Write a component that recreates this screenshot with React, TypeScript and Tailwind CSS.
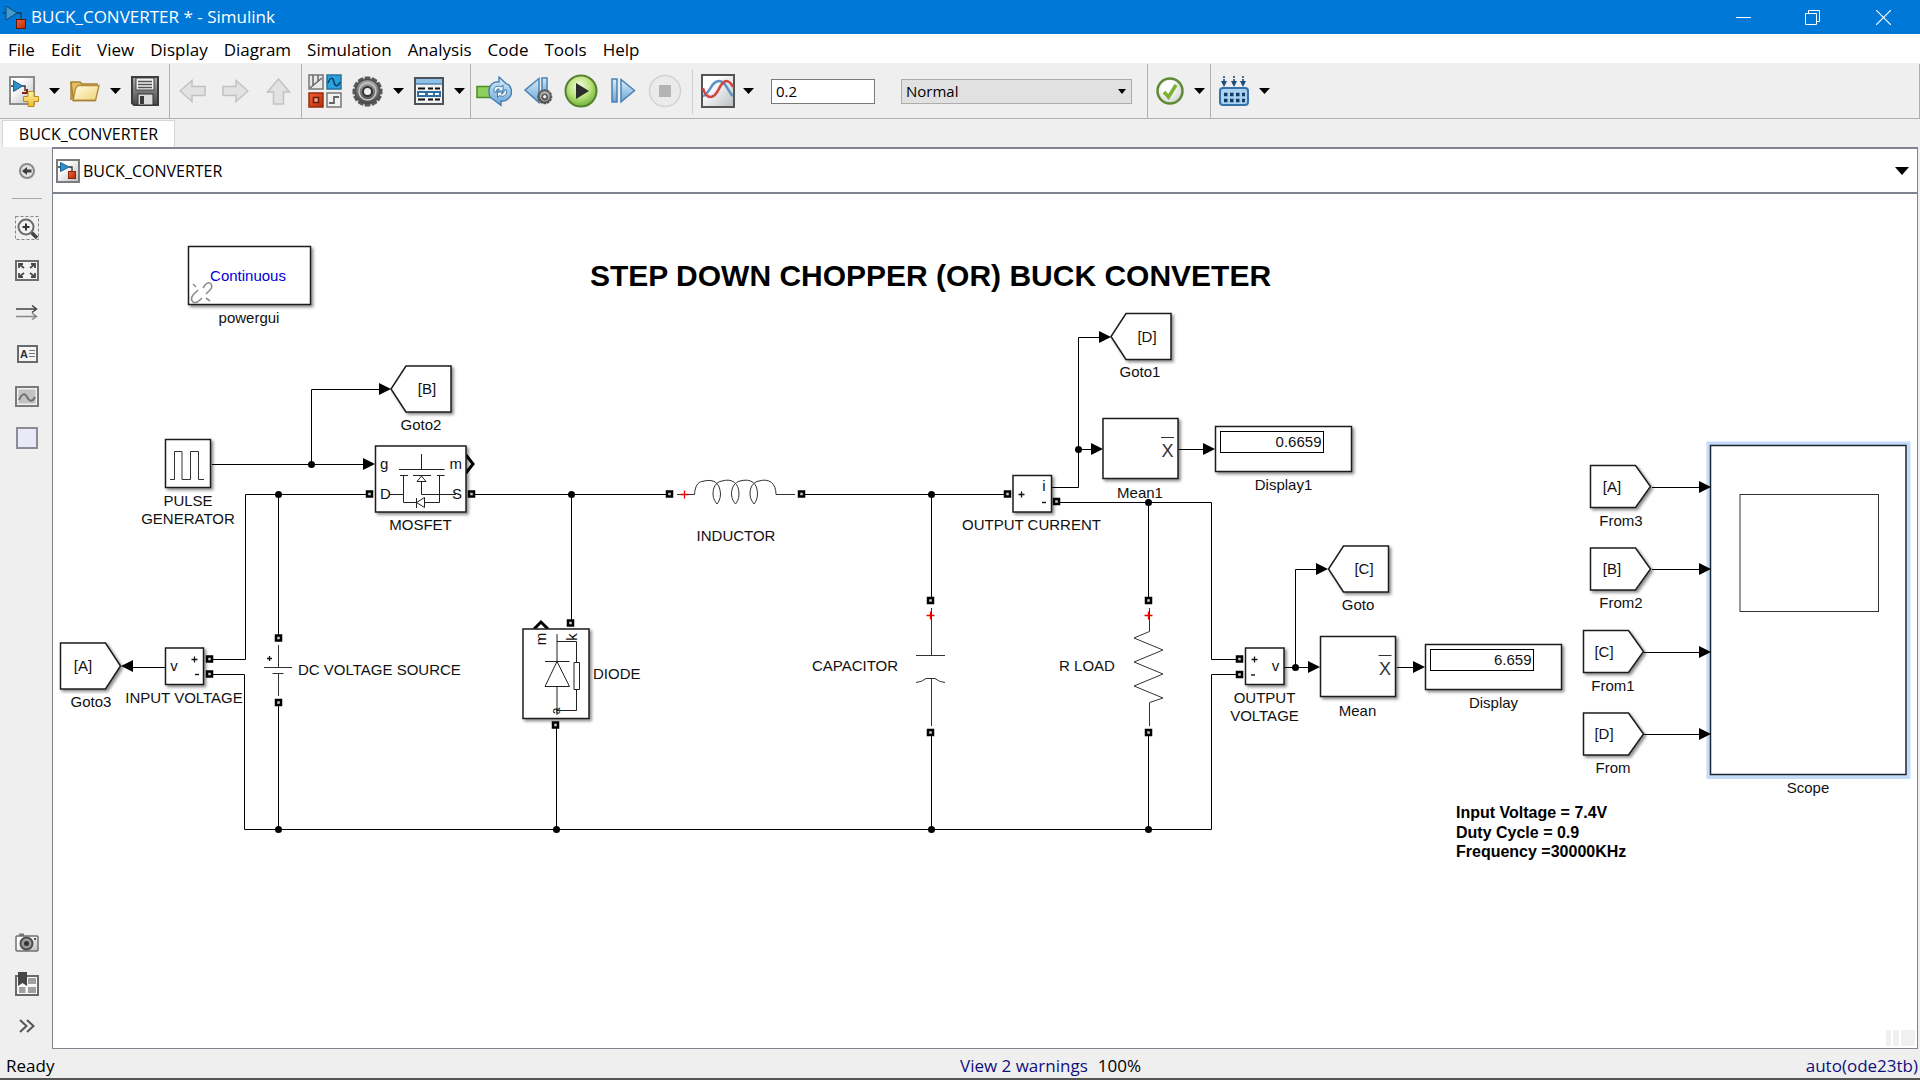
import type { ReactNode } from "react";

/* ---------- Toolbar and palette icons ---------- */

function Defs() {
  return (
    <svg width="0" height="0" className="absolute" aria-hidden="true">
      <defs>
        <linearGradient id="page" x1="0" y1="0" x2="1" y2="1">
          <stop offset="0.3" stopColor="#ffffff" />
          <stop offset="1" stopColor="#b9bcc0" />
        </linearGradient>
        <linearGradient id="gold" x1="0" y1="0" x2="0" y2="1">
          <stop offset="0" stopColor="#fff3b0" />
          <stop offset="1" stopColor="#f0b92a" />
        </linearGradient>
        <linearGradient id="folder" x1="0" y1="0" x2="1" y2="1">
          <stop offset="0" stopColor="#fffbe2" />
          <stop offset="1" stopColor="#f0d478" />
        </linearGradient>
        <linearGradient id="steel" x1="0" y1="0" x2="0" y2="1">
          <stop offset="0" stopColor="#a9a9a9" />
          <stop offset="1" stopColor="#4a4a4a" />
        </linearGradient>
        <linearGradient id="sky" x1="0" y1="0" x2="0" y2="1">
          <stop offset="0" stopColor="#d9ecfa" />
          <stop offset="1" stopColor="#6ba5d6" />
        </linearGradient>
        <radialGradient id="play" cx="0.45" cy="0.35" r="0.7">
          <stop offset="0" stopColor="#f4fbe4" />
          <stop offset="0.5" stopColor="#bde37e" />
          <stop offset="1" stopColor="#5fae2e" />
        </radialGradient>
        <radialGradient id="disc" cx="0.4" cy="0.35" r="0.7">
          <stop offset="0.3" stopColor="#ffffff" />
          <stop offset="1" stopColor="#d0d0d0" />
        </radialGradient>
        <linearGradient id="red" x1="0" y1="0" x2="1" y2="1">
          <stop offset="0" stopColor="#f0623a" />
          <stop offset="1" stopColor="#b52c0a" />
        </linearGradient>
      </defs>
    </svg>
  );
}

function Icon({ w, h, children }: { w: number; h: number; children: ReactNode }) {
  return (
    <svg width={w} height={h} viewBox={`0 0 ${w} ${h}`} fill="none" aria-hidden="true" className="block">
      {children}
    </svg>
  );
}

const Caret = () => (
  <Icon w={11} h={6}>
    <path d="M0 0H11L5.5 6Z" fill="#000" />
  </Icon>
);

const AppLogo = () => (
  <Icon w={24} h={24}>
    <path d="M0 8H3M14 8H18V15" stroke="#123a58" strokeWidth="1.3" />
    <path d="M3 1L14 8L3 15Z" fill="#3f9bd0" stroke="#14496f" />
    <rect x="13.5" y="14.5" width="9" height="9" fill="url(#red)" stroke="#5e1606" />
  </Icon>
);

const ModelIcon = () => (
  <Icon w={24} h={24}>
    <rect x="1" y="1" width="22" height="22" fill="url(#page)" stroke="#7b7b7b" strokeWidth="2" />
    <path d="M2 8H5M13 8H16V13" stroke="#333" strokeWidth="1.3" />
    <path d="M4.5 3.5L13 8L4.5 12.5Z" fill="#2f8fcb" stroke="#1d5f8c" />
    <rect x="12.5" y="12.5" width="7" height="7" fill="url(#red)" stroke="#8a2408" />
  </Icon>
);

const NewIcon = () => (
  <Icon w={30} h={31}>
    <rect x="1" y="1" width="24" height="27" fill="url(#page)" stroke="#8b8b8b" strokeWidth="2" />
    <path d="M2 10H5M13 10H16V15" stroke="#333" strokeWidth="1.4" />
    <path d="M4.5 4.5L13.5 10L4.5 15.5Z" fill="#2f8fcb" stroke="#1d5f8c" />
    <path d="M13 17H18V14H19" stroke="#8a2408" strokeWidth="2" />
    <path d="M19 15.5H25V20.5H29.5V25.5H25V30.5H19V25.5H14.5V20.5H19Z" fill="url(#gold)" stroke="#b98a1c" />
  </Icon>
);

const OpenIcon = () => (
  <Icon w={30} h={22}>
    <path d="M1 20V2H10L12 4H27V7" fill="#e3bf62" stroke="#a98336" strokeWidth="1.4" />
    <path d="M29 5.5H8L5.5 8.5L3 20.5H25.5Z" fill="url(#folder)" stroke="#b48d3c" strokeWidth="1.4" />
    <path d="M1 2L3.5 20.5H25.5" stroke="#a98336" strokeWidth="1.4" />
  </Icon>
);

const SaveIcon = () => (
  <Icon w={28} h={30}>
    <path d="M1 1H27V29H3L1 27Z" fill="url(#steel)" stroke="#3c3c3c" strokeWidth="2" />
    <rect x="5" y="2" width="18" height="12" fill="#f1f1f1" stroke="#444" />
    <path d="M7 5.5H21M7 8.5H21M7 11.5H21" stroke="#555" strokeWidth="1.5" />
    <rect x="7" y="18" width="15" height="11" fill="#dcdcdc" stroke="#333" />
    <rect x="9" y="20" width="4" height="8" fill="#3a3a3a" />
  </Icon>
);

const LeftIcon = () => (
  <Icon w={27} h={24}>
    <path d="M1 12L13 1.5V7.5H26V16.5H13V22.5Z" fill="#e2e2e2" stroke="#c2c2c2" strokeWidth="1.5" />
  </Icon>
);
const RightIcon = () => (
  <Icon w={27} h={24}>
    <path d="M26 12L14 1.5V7.5H1V16.5H14V22.5Z" fill="#e2e2e2" stroke="#c2c2c2" strokeWidth="1.5" />
  </Icon>
);
const UpIcon = () => (
  <Icon w={27} h={27}>
    <path d="M13.5 1L24.5 14H18.5V26H8.5V14H2.5Z" fill="#e2e2e2" stroke="#c2c2c2" strokeWidth="1.5" />
  </Icon>
);

const LibraryIcon = () => (
  <Icon w={34} h={34}>
    <rect x="1" y="1" width="14" height="14" fill="#e9e9e9" stroke="#777" strokeWidth="1.5" />
    <path d="M5 1V11M10 1V7M2 14L14 4" stroke="#666" strokeWidth="1.5" />
    <rect x="19" y="1" width="14" height="14" fill="#2aa0dd" stroke="#2672a0" strokeWidth="1.5" />
    <path d="M20 9C22 3 25 3 26 8S30 13 32 8" stroke="#0d3f66" strokeWidth="1.5" />
    <rect x="1" y="19" width="14" height="14" fill="url(#red)" stroke="#9a2b0c" strokeWidth="1.5" />
    <rect x="5.5" y="23.5" width="5" height="5" fill="#f7a58a" stroke="#6e1c05" strokeWidth="1.5" />
    <rect x="19" y="19" width="14" height="14" fill="#f1f1f1" stroke="#777" strokeWidth="1.5" />
    <path d="M21 29H26V23H31" stroke="#666" strokeWidth="1.8" />
  </Icon>
);

const GEAR_TEETH = [0, 30, 60, 90, 120, 150, 180, 210, 240, 270, 300, 330];
const GearShape = () => (
  <g>
    {GEAR_TEETH.map((a) => (
      <rect key={a} x="12.5" y="0.5" width="6" height="7" rx="1" fill="#5a5a5a" transform={`rotate(${a} 15.5 15.5)`} />
    ))}
    <circle cx="15.5" cy="15.5" r="12" fill="url(#steel)" stroke="#4d4d4d" strokeWidth="1.5" />
    <circle cx="15.5" cy="15.5" r="8.5" stroke="#c9c9c9" strokeWidth="1.5" />
    <circle cx="15.5" cy="15.5" r="4.5" fill="#efefef" stroke="#333" strokeWidth="2" />
  </g>
);
const GearIcon = () => (
  <Icon w={31} h={31}>
    <GearShape />
  </Icon>
);

const ExplorerIcon = () => (
  <Icon w={30} h={28}>
    <rect x="1" y="1" width="28" height="26" fill="#f2f2f2" stroke="#4d5358" strokeWidth="2" />
    <rect x="2" y="2" width="26" height="5" fill="#8fc0e8" />
    <path d="M1 7H29" stroke="#3d6f9c" strokeWidth="1.2" />
    <path d="M4 11.5H11M14 11.5H19M21 11.5H26M4 22.5H11M14 22.5H19M21 22.5H26" stroke="#111" strokeWidth="2" />
    <rect x="3" y="14" width="24" height="6" fill="#2f6fa8" />
    <path d="M5 17H11M14 17H19M21 17H25" stroke="#fff" strokeWidth="2" />
  </Icon>
);

const UpdateIcon = () => (
  <Icon w={36} h={31}>
    <rect x="1" y="10.500" width="14" height="11" fill="#8fd05a" stroke="#4f8a26" strokeWidth="1.5" />
    <path
      d="M13 17C12 9 18 5 23 6V1L30 7.500L33 9C36 13 36 17 34.500 20C32 24 28 25.500 25 25V29.500L18 24C14 22 13 20 13 17Z"
      fill="url(#sky)"
      stroke="#3f79ad"
      strokeWidth="1.3"
    />
    <path
      d="M18 16C17 11 21 9 25 11L27 9V15H21.500L23.500 13C21 12.500 20 14 20.500 16ZM30.500 14C31.500 19 27 21.500 23.500 19.500L21.500 21.500V16H27L25 18C27.500 18 28.500 16 28 14Z"
      fill="#f4f9fd"
      stroke="#3f79ad"
    />
  </Icon>
);

const StepBackIcon = () => (
  <Icon w={32} h={30}>
    <path d="M17 2.5V26.5L3 14Z" fill="url(#sky)" stroke="#4b81b2" strokeWidth="1.5" />
    <rect x="20" y="2" width="5" height="16" fill="url(#sky)" stroke="#4b81b2" strokeWidth="1.5" />
    <g transform="translate(15 13) scale(0.5)">
      <GearShape />
    </g>
  </Icon>
);

const PlayIcon = () => (
  <Icon w={34} h={34}>
    <circle cx="17" cy="17" r="15.5" fill="url(#play)" stroke="#57802f" strokeWidth="2" />
    <path d="M12 9L25 17L12 25Z" fill="#2b2b2b" />
  </Icon>
);

const StepIcon = () => (
  <Icon w={30} h={26}>
    <rect x="4" y="1" width="5" height="23" fill="url(#sky)" stroke="#4b81b2" strokeWidth="1.5" />
    <path d="M13 1.5V24L26.5 12.5Z" fill="url(#sky)" stroke="#4b81b2" strokeWidth="1.5" />
  </Icon>
);

const StopIcon = () => (
  <Icon w={34} h={34}>
    <circle cx="17" cy="17" r="15.5" fill="#ebebeb" stroke="#d2d2d2" strokeWidth="1.5" />
    <rect x="11" y="11" width="12" height="12" fill="#b3b3b3" />
  </Icon>
);

const SignalIcon = () => (
  <Icon w={34} h={34}>
    <rect x="1" y="1" width="32" height="32" fill="url(#page)" stroke="#555" strokeWidth="2" />
    <path d="M2 22C9 20 10 7 18 7C25 7 27 18 32 22" stroke="#5a93c8" strokeWidth="2.5" />
    <path d="M2 14C4 21 6 23 10 23C18 22 18 8 25 7C29 7 31 11 32 13" stroke="#cf4544" strokeWidth="2.5" />
  </Icon>
);

const CheckIcon = () => (
  <Icon w={28} h={28}>
    <circle cx="14" cy="14" r="12.5" fill="url(#disc)" stroke="#5f8a35" strokeWidth="2.5" />
    <path d="M8 15L12.5 20L20 8" stroke="#79b32c" strokeWidth="3.5" />
  </Icon>
);

const BuildIcon = () => (
  <Icon w={30} h={32}>
    <path d="M5 1V9M15 1V9M24 1V9" stroke="#1f4e7c" strokeWidth="1.6" strokeDasharray="2 1" />
    <path d="M2 6H8L5 12ZM12 6H18L15 12ZM21 6H27L24 12Z" fill="#1f4e7c" />
    <rect x="1" y="13" width="28" height="17" rx="3" fill="#a9d1f2" stroke="#3472a9" strokeWidth="2" />
    <path d="M5 19.5H26M5 25.5H26" stroke="#123c66" strokeWidth="3.5" strokeDasharray="3.5 2.5" />
  </Icon>
);

/* Palette icons */
const CollapseIcon = () => (
  <Icon w={18} h={18}>
    <circle cx="9" cy="9" r="7" fill="#e2e2e2" stroke="#8a8a8a" strokeWidth="2" />
    <path d="M4 9L9 5V7.5H13.5V10.5H9V13Z" fill="#3c3c3c" />
  </Icon>
);
const ZoomIcon = () => (
  <Icon w={24} h={24}>
    <rect x="0.5" y="0.5" width="23" height="23" stroke="#858585" strokeDasharray="3 2" />
    <path d="M16 16L22 22" stroke="#444" strokeWidth="3.5" />
    <circle cx="11" cy="11" r="7.5" fill="#f3f3f3" stroke="#6c6c6c" strokeWidth="2" />
    <path d="M11 7.5V14.5M7.5 11H14.5" stroke="#333" strokeWidth="2" />
  </Icon>
);
const FitIcon = () => (
  <Icon w={24} h={21}>
    <rect x="1" y="1" width="22" height="19" fill="#f3f3f3" stroke="#6e6e6e" strokeWidth="2" />
    <path d="M4 8V4H8M4.5 4.5L9 8M16 4H20V8M19.5 4.5L15 8M4 13V17H8M4.5 16.5L9 13M16 17H20V13M19.5 16.5L15 13" stroke="#4a4a4a" strokeWidth="1.8" />
  </Icon>
);
const ArrowsIcon = () => (
  <Icon w={22} h={15}>
    <path d="M0 4H20M16 0.5L20.5 4L16 7.5" stroke="#444" strokeWidth="1.5" />
    <path d="M0 11.5H20M16 8L20.5 11.5L16 14.5" stroke="#888" strokeWidth="1.5" />
  </Icon>
);
const AnnotationIcon = () => (
  <Icon w={21} h={18}>
    <rect x="1" y="1" width="19" height="16" fill="#f5f5f5" stroke="#6a6a6a" strokeWidth="2" />
    <text x="7" y="13" fontSize="11" fontWeight="700" textAnchor="middle" fill="#333" className="font-['Liberation_Sans',sans-serif]">
      A
    </text>
    <path d="M12 5.5H18M12 8.5H18M12 11.5H18" stroke="#777" />
  </Icon>
);
const ImageIcon = () => (
  <Icon w={24} h={21}>
    <rect x="1" y="1" width="22" height="19" fill="#f0f0f0" stroke="#7a7a7a" strokeWidth="2" />
    <rect x="3.5" y="3.5" width="17" height="14" fill="#c2c2c2" />
    <path d="M4 14C7 7 10 7 12 11S17 17 20 11" stroke="#707070" strokeWidth="2" />
  </Icon>
);
const AreaIcon = () => (
  <Icon w={22} h={22}>
    <rect x="1" y="1" width="20" height="20" fill="#e9e9f8" stroke="#8c8c96" strokeWidth="2" />
  </Icon>
);
const CameraIcon = () => (
  <Icon w={24} h={19}>
    <rect x="4" y="0.5" width="5" height="3" fill="#777" />
    <rect x="1" y="3" width="22" height="15" rx="1" fill="url(#page)" stroke="#707070" strokeWidth="1.5" />
    <circle cx="11.5" cy="10.5" r="6" fill="#9a9a9a" stroke="#4d4d4d" strokeWidth="2" />
    <circle cx="11.5" cy="10.5" r="2.5" fill="#333" />
    <rect x="19" y="5" width="2" height="2" fill="#555" />
  </Icon>
);
const BookmarkIcon = () => (
  <Icon w={24} h={24}>
    <rect x="1" y="4" width="22" height="19" fill="#f7f7f7" stroke="#6a6a6a" strokeWidth="2" />
    <path d="M13 6H21V12H13ZM13 15H21V21H13ZM4 15H10.5V21H4Z" fill="#a0a0a0" />
    <path d="M3 0H12V14L7.5 11L3 14Z" fill="#454545" />
  </Icon>
);
const MoreIcon = () => (
  <Icon w={16} h={14}>
    <path d="M1 1L7.5 7L1 13M8 1L14.5 7L8 13" stroke="#555" strokeWidth="2" />
  </Icon>
);

/* ---------- Window chrome ---------- */

function ToolButton({ label, children }: { label: string; children: ReactNode }) {
  return (
    <button type="button" aria-label={label} className="flex shrink-0 items-center justify-center">
      {children}
    </button>
  );
}

function Group({ className, children }: { className: string; children: ReactNode }) {
  return (
    <div className={`flex shrink-0 items-center border-r border-[#b0b0b0] ${className}`}>{children}</div>
  );
}

const MENUS = ["File", "Edit", "View", "Display", "Diagram", "Simulation", "Analysis", "Code", "Tools", "Help"];

function TitleBar() {
  return (
    <header className="flex h-[34px] shrink-0 items-center bg-[#0078d7] text-white">
      <div className="pl-[3px]">
        <AppLogo />
      </div>
      <h1 className="ml-1 flex-1">BUCK_CONVERTER * - Simulink</h1>
      <button type="button" aria-label="Minimize" className="flex h-full w-[71px] items-center justify-center">
        <Icon w={15} h={15}>
          <path d="M0 7.5H15" stroke="#fff" />
        </Icon>
      </button>
      <button type="button" aria-label="Restore" className="flex h-full w-[67px] items-center justify-center">
        <Icon w={15} h={15}>
          <path d="M0.5 3.5H11.5V14.5H0.5ZM3.5 3V0.5H14.5V11.5H12" stroke="#fff" />
        </Icon>
      </button>
      <button type="button" aria-label="Close" className="flex h-full w-[74px] items-center justify-center">
        <Icon w={15} h={15}>
          <path d="M0 0L15 15M15 0L0 15" stroke="#fff" strokeWidth="1.2" />
        </Icon>
      </button>
    </header>
  );
}

function Toolbar() {
  return (
    <div role="toolbar" className="flex h-[55px] shrink-0 border-r border-b border-[#b0b0b0]">
      <Group className="gap-2.5 pr-2.5 pl-[9px]">
        <ToolButton label="New model"><NewIcon /></ToolButton>
        <ToolButton label="New options"><Caret /></ToolButton>
        <ToolButton label="Open"><OpenIcon /></ToolButton>
        <ToolButton label="Open options"><Caret /></ToolButton>
        <ToolButton label="Save"><SaveIcon /></ToolButton>
      </Group>
      <Group className="gap-4 px-[9px]">
        <ToolButton label="Back"><LeftIcon /></ToolButton>
        <ToolButton label="Forward"><RightIcon /></ToolButton>
        <ToolButton label="Up to parent"><UpIcon /></ToolButton>
      </Group>
      <Group className="gap-2.5 pr-[5px] pl-1.5">
        <ToolButton label="Library browser"><LibraryIcon /></ToolButton>
        <ToolButton label="Model configuration"><GearIcon /></ToolButton>
        <ToolButton label="Configuration options"><Caret /></ToolButton>
        <ToolButton label="Model explorer"><ExplorerIcon /></ToolButton>
        <ToolButton label="Explorer options"><Caret /></ToolButton>
      </Group>
      <div className="flex shrink-0 items-center gap-2.5 pl-[5px]">
        <ToolButton label="Update model"><UpdateIcon /></ToolButton>
        <ToolButton label="Step back"><StepBackIcon /></ToolButton>
        <ToolButton label="Run"><PlayIcon /></ToolButton>
        <ToolButton label="Step forward"><StepIcon /></ToolButton>
        <ToolButton label="Stop"><StopIcon /></ToolButton>
        <div className="h-[45px] w-px bg-[#cfcfcf]" />
      </div>
      <Group className="gap-2 pr-[15px] pl-2">
        <ToolButton label="Simulation data inspector"><SignalIcon /></ToolButton>
        <ToolButton label="Inspector options"><Caret /></ToolButton>
        <input
          aria-label="Simulation stop time"
          defaultValue="0.2"
          className="ml-[9px] h-[25px] w-[104px] border border-[#7a7a7a] bg-white px-1 text-[15px] leading-none"
        />
        <div className="relative ml-[18px] w-[231px]">
          <select
            aria-label="Simulation mode"
            className="block h-[25px] w-full appearance-none border border-[#adadad] bg-[#e1e1e1] px-1 text-[15px] leading-none"
          >
            <option>Normal</option>
          </select>
          <svg width="8" height="5" viewBox="0 0 8 5" className="pointer-events-none absolute top-2.5 right-1.5" aria-hidden="true">
            <path d="M0 0H8L4 5Z" fill="#000" />
          </svg>
        </div>
      </Group>
      <Group className="gap-2.5 pr-[5px] pl-2">
        <ToolButton label="Model advisor"><CheckIcon /></ToolButton>
        <ToolButton label="Advisor options"><Caret /></ToolButton>
      </Group>
      <div className="flex items-center gap-2.5 pl-2">
        <ToolButton label="Build model"><BuildIcon /></ToolButton>
        <ToolButton label="Build options"><Caret /></ToolButton>
      </div>
    </div>
  );
}

function PaletteButton({ label, children }: { label: string; children: ReactNode }) {
  return (
    <button type="button" aria-label={label} className="flex h-[42px] w-full items-center justify-center">
      {children}
    </button>
  );
}

function Palette() {
  return (
    <aside className="flex w-[52px] shrink-0 flex-col pb-0.5 pl-0.5">
      <button type="button" aria-label="Hide browser" className="flex h-12 w-full items-center justify-center">
        <CollapseIcon />
      </button>
      <hr className="mx-2.5 mt-[3px] mb-2 border-[#a8a8a8]" />
      <PaletteButton label="Zoom"><ZoomIcon /></PaletteButton>
      <PaletteButton label="Fit to view"><FitIcon /></PaletteButton>
      <PaletteButton label="Sample time"><ArrowsIcon /></PaletteButton>
      <PaletteButton label="Annotation"><AnnotationIcon /></PaletteButton>
      <PaletteButton label="Image"><ImageIcon /></PaletteButton>
      <PaletteButton label="Area"><AreaIcon /></PaletteButton>
      <div className="flex-1" />
      <PaletteButton label="Screenshot"><CameraIcon /></PaletteButton>
      <PaletteButton label="Viewmarks"><BookmarkIcon /></PaletteButton>
      <PaletteButton label="More"><MoreIcon /></PaletteButton>
    </aside>
  );
}

/* ---------- Block diagram ---------- */

type Anchor = "start" | "middle" | "end";

function T({ x, y, anchor = "middle", children }: { x: number; y: number; anchor?: Anchor; children: ReactNode }) {
  return (
    <text x={x} y={y} textAnchor={anchor} fill="#111" stroke="none">
      {children}
    </text>
  );
}

function Box({ x, y, w, h }: { x: number; y: number; w: number; h: number }) {
  return <rect x={x} y={y} width={w} height={h} fill="#fff" stroke="#1c1c1c" strokeWidth="1.5" filter="url(#shade)" />;
}

/* Tag pointing left (dir -1) or right (dir 1); x is the flat side, y the centre line. */
function Tag({ x, y, dir, half, tag, name, nameX, nameY, tagX }: {
  x: number; y: number; dir: 1 | -1; half: number; tag: string; name: string; nameX: number; nameY: number; tagX: number;
}) {
  return (
    <g>
      <path
        d={`M${x} ${y - half}H${x + dir * 45}L${x + dir * 60} ${y}L${x + dir * 45} ${y + half}H${x}Z`}
        fill="#fff"
        stroke="#1c1c1c"
        strokeWidth="1.5"
        filter="url(#shade)"
      />
      <T x={tagX} y={y + 5}>{tag}</T>
      <T x={nameX} y={nameY}>{name}</T>
    </g>
  );
}

const Arrow = ({ x, y, dir = 1 }: { x: number; y: number; dir?: 1 | -1 }) => (
  <path d={`M${x} ${y}L${x - dir * 12} ${y - 6}V${y + 6}Z`} fill="#000" stroke="none" />
);

const Plus = ({ x, y, r = 3, color = "#111" }: { x: number; y: number; r?: number; color?: string }) => (
  <path d={`M${x - r} ${y}H${x + r}M${x} ${y - r}V${y + r}`} stroke={color} strokeWidth="1.3" />
);

const Minus = ({ x, y }: { x: number; y: number }) => <path d={`M${x - 2} ${y}H${x + 2}`} stroke="#111" strokeWidth="1.4" />;

const WIRES = [
  "M212 464.5H366",
  "M311.5 464.5V389.5H382",
  "M366 494.5H245.5V659.5H213",
  "M213 674.5H244.5V829.5H1211.5V674.5H1236",
  "M278.5 494.5V635M278.5 706V829.5",
  "M165 667.5H132",
  "M475 494.5H666",
  "M571.5 494.5V620",
  "M556.5 728V829.5",
  "M805 494.5H1004",
  "M931.5 494.5V597M931.5 736V829.5",
  "M1052 487.5H1078.5V337.5H1102",
  "M1078.5 449.5H1094",
  "M1179 449.5H1206",
  "M1060 502.5H1211.5V659.5H1236",
  "M1148.5 502.5V597M1148.5 736V829.5",
  "M1284 667.5H1310",
  "M1295.5 667.5V569.5H1318",
  "M1397 667.5H1416",
  "M1652 487.5H1700M1652 569.5H1700M1644 652.5H1700M1644 734.5H1700",
];

const JUNCTIONS = [
  [311.5, 464.5], [278.5, 494.5], [571.5, 494.5], [931.5, 494.5], [1078.5, 449.5], [1148.5, 502.5],
  [1295.5, 667.5], [278.5, 829.5], [556.5, 829.5], [931.5, 829.5], [1148.5, 829.5],
];

const PORTS = [
  [369.5, 494], [471.5, 494], [209.5, 659], [209.5, 674], [278.5, 638], [278.5, 702.5], [570.5, 623], [555.5, 725],
  [669.5, 494], [801.5, 494], [930.5, 600.5], [930.5, 732.5], [1007.5, 494], [1056.5, 501.5], [1148.5, 600.5],
  [1148.5, 732.5], [1239.5, 659], [1239.5, 674.5],
];

const ARROWS = [
  [375, 464], [391, 389], [1111, 337], [1103, 449], [1215, 449], [1328, 569], [1320, 667], [1425, 667],
  [1711, 487], [1711, 569], [1711, 652], [1711, 734],
];

function Mean({ x, y, name }: { x: number; y: number; name: string }) {
  return (
    <g>
      <Box x={x} y={y} w={75} h={60} />
      <path d={`M${x + 58} ${y + 19}H${x + 71}`} stroke="#333" />
      <text x={x + 64.5} y={y + 38} fontSize="18" textAnchor="middle" fill="#333">X</text>
      <T x={x + 37} y={y + 79}>{name}</T>
    </g>
  );
}

function Display({ x, y, value, name }: { x: number; y: number; value: string; name: string }) {
  return (
    <g>
      <Box x={x} y={y} w={136} h={45} />
      <rect x={x + 5} y={y + 5} width="103" height="21" fill="#fff" stroke="#000" />
      <T x={x + 106} y={y + 20} anchor="end">{value}</T>
      <T x={x + 68} y={y + 63}>{name}</T>
    </g>
  );
}

function Diagram() {
  return (
    <svg
      width="1864"
      height="853"
      viewBox="53 194 1864 853"
      role="img"
      aria-label="Buck converter block diagram"
      fill="none"
      fontSize="15"
      className="block shrink-0 font-['Liberation_Sans',Arial,sans-serif]"
    >
      <defs>
        <filter id="shade" x="-10%" y="-10%" width="130%" height="130%">
          <feDropShadow dx="2" dy="2" stdDeviation="1.5" floodColor="#000" floodOpacity="0.45" />
        </filter>
      </defs>

      <rect x="1708.5" y="443.5" width="200" height="333.5" stroke="#c2dcfa" strokeWidth="4" />

      <g stroke="#000" strokeWidth="1">
        {WIRES.map((d) => <path key={d} d={d} />)}
      </g>

      {/* powergui */}
      <Box x={188.5} y={246.5} w={122} h={58} />
      <text x="248" y="281" textAnchor="middle" fill="#0000d8">Continuous</text>
      <path
        d="M203 288L205 285Q209 281 211 284Q213 287 210 290L206 294M198 290L193 295Q190 299 193 302Q196 304 200 300L202 298M193 284L196 287M206 298L210 301"
        stroke="#8d8d8d"
        strokeWidth="1.6"
      />
      <T x={249} y={323}>powergui</T>

      <text x="930.5" y="286" fontSize="30" fontWeight="700" textAnchor="middle" fill="#000">
        STEP DOWN CHOPPER (OR) BUCK CONVETER
      </text>

      {/* goto / from tags */}
      <Tag x={451} y={389} dir={-1} half={23} tag="[B]" tagX={427} name="Goto2" nameX={421} nameY={430} />
      <Tag x={1171} y={336.5} dir={-1} half={23} tag="[D]" tagX={1147} name="Goto1" nameX={1140} nameY={377} />
      <Tag x={1388.5} y={569} dir={-1} half={23} tag="[C]" tagX={1364} name="Goto" nameX={1358} nameY={610} />
      <Tag x={60.5} y={666} dir={1} half={23} tag="[A]" tagX={83} name="Goto3" nameX={91} nameY={707} />
      <Tag x={1590.5} y={486.5} dir={1} half={21} tag="[A]" tagX={1612} name="From3" nameX={1621} nameY={526} />
      <Tag x={1590.5} y={569} dir={1} half={21} tag="[B]" tagX={1612} name="From2" nameX={1621} nameY={608} />
      <Tag x={1583.5} y={651.5} dir={1} half={21} tag="[C]" tagX={1604} name="From1" nameX={1613} nameY={691} />
      <Tag x={1583.5} y={734} dir={1} half={21} tag="[D]" tagX={1604} name="From" nameX={1613} nameY={773} />

      {/* pulse generator */}
      <Box x={165.5} y={439.5} w={45} h={48} />
      <path d="M170 479.5H174.5V451.5H182V479.5H190.5V451.5H198.5V479.5H204" stroke="#333" />
      <T x={188} y={506}>PULSE</T>
      <T x={188} y={524}>GENERATOR</T>

      {/* mosfet */}
      <path d="M466 455L473 464L466 473" stroke="#000" strokeWidth="3" fill="#fff" />
      <Box x={375.5} y={446} w={90.5} h={66} />
      <path
        d="M421.5 454V469.5M399 469.5H444.5M400 475.5H408M413 475.5H431M437 475.5H444.5M403.5 475.5V502.5H416.5M439.5 475.5V502.5H424.5M390 494.5H403.5M421.5 481V494.5H456M421.5 476L417 481.5H426ZM416.5 498V508M416.5 502.5L424.5 497.5V507.5Z"
        stroke="#222"
      />
      <T x={380} y={469} anchor="start">g</T>
      <T x={462} y={469} anchor="end">m</T>
      <T x={380} y={499} anchor="start">D</T>
      <T x={462} y={499} anchor="end">S</T>
      <T x={420.5} y={530}>MOSFET</T>

      {/* input voltage measurement */}
      <Box x={165.5} y={648} w={38} h={36.5} />
      <T x={174} y={671}>v</T>
      <Plus x={194.5} y={659.5} />
      <Minus x={197} y={674.5} />
      <T x={184} y={703}>INPUT VOLTAGE</T>

      {/* dc source */}
      <path d="M278.5 645V667.5M264 667.5H292M272.5 673.5H283.5M278.5 673.5V696" stroke="#333" />
      <Plus x={269.5} y={658.5} r={2.5} />
      <T x={298} y={675} anchor="start">DC VOLTAGE SOURCE</T>

      {/* diode */}
      <path d="M534 629L541 622L548 629" stroke="#000" strokeWidth="3" />
      <Box x={523} y={629} w={66} h={89.5} />
      <path
        d="M557 634V661.5M545 661.5H569.5M557 661.5L545 686.5H569.5ZM557 686.5V715M557 641.5H576.5V662.5M576.5 689.5V710.5H557M574 662.5H579.5V689.5H574Z"
        stroke="#222"
      />
      <text transform="translate(546 639) rotate(-90)" textAnchor="middle" fill="#111">m</text>
      <text transform="translate(577 637) rotate(-90)" textAnchor="middle" fill="#111">k</text>
      <text transform="translate(560 711) rotate(-90)" fontSize="12" textAnchor="middle" fill="#111">a</text>
      <T x={593} y={679} anchor="start">DIODE</T>

      {/* inductor */}
      <path
        d="M677 494.5H694.5C695 486 698 482 702 481.5C714 478 720 483 720.5 494C720.5 499 718.5 502 717 504C715.5 502 713 499 713 494C713 487 716 482 722 481C732 478 739 483 739 494C739 499 737 502 735.5 504C734 502 731.5 499 731.5 494C731.5 487 735 482 740 481C751 478 757.5 483 757.5 494C757.5 499 755.5 502 754 504C752.5 502 750 499 750 494C750 487 753 482 759 481C769 478 776 483 776 494.5H795"
        stroke="#333"
      />
      <Plus x={684.5} y={494.5} r={4} color="#f00000" />
      <T x={736} y={541}>INDUCTOR</T>

      {/* capacitor */}
      <path
        d="M931.5 608V655.5M916 655.5H945M916 682.5Q922 682 926 678.5H935Q939 682 945 682.5M931.5 678.5V726"
        stroke="#333"
      />
      <Plus x={930.5} y={615.5} r={4} color="#f00000" />
      <T x={855} y={671}>CAPACITOR</T>

      {/* load resistor */}
      <path
        d="M1149.5 608V631.5L1134 638L1163 650L1134 662L1163 674L1134 686L1163 698L1149.5 702.5V726"
        stroke="#333"
      />
      <Plus x={1148.5} y={615.5} r={4} color="#f00000" />
      <T x={1087} y={671}>R LOAD</T>

      {/* output current measurement */}
      <Box x={1013} y={475.5} w={38.5} h={36.5} />
      <Plus x={1021.5} y={494.5} />
      <T x={1044} y={491}>i</T>
      <Minus x={1044} y={502.5} />
      <T x={1031.5} y={530}>OUTPUT CURRENT</T>

      {/* output voltage measurement */}
      <Box x={1245.5} y={648} w={38.5} h={36.5} />
      <Plus x={1254.5} y={659.5} />
      <Minus x={1253} y={675} />
      <T x={1275.5} y={671}>v</T>
      <T x={1264.5} y={703}>OUTPUT</T>
      <T x={1264.5} y={721}>VOLTAGE</T>

      <Mean x={1103} y={418.5} name="Mean1" />
      <Mean x={1320.5} y={636.5} name="Mean" />
      <Display x={1215.5} y={426.5} value="0.6659" name="Display1" />
      <Display x={1425.5} y={644.5} value="6.659" name="Display" />

      {/* scope */}
      <rect x="1710.5" y="445.5" width="195.5" height="329" fill="#fff" stroke="#1c2430" strokeWidth="1.5" />
      <rect x="1740" y="494.5" width="138.5" height="117" stroke="#333" />
      <T x={1808} y={793}>Scope</T>

      {PORTS.map(([x, y]) => (
        <rect key={`${x}-${y}`} x={x - 2.5} y={y - 2.5} width="5" height="5" fill="#ccc" stroke="#000" strokeWidth="2.5" />
      ))}
      {JUNCTIONS.map(([x, y]) => (
        <circle key={`${x}-${y}`} cx={x} cy={y} r="3.5" fill="#000" />
      ))}
      {ARROWS.map(([x, y]) => (
        <Arrow key={`${x}-${y}`} x={x} y={y} />
      ))}
      <Arrow x={121} y={666} dir={-1} />

      <g fontSize="16" fontWeight="700" fill="#000">
        <text x="1456" y="818">Input Voltage = 7.4V</text>
        <text x="1456" y="838">Duty Cycle = 0.9</text>
        <text x="1456" y="857">Frequency =30000KHz</text>
      </g>
    </svg>
  );
}

/* ---------- App ---------- */

export default function App() {
  return (
    <div className="flex h-screen w-full flex-col overflow-hidden bg-[#efefef] font-['Open_Sans','Noto_Sans',sans-serif] text-[17px] text-black">
      <Defs />
      <TitleBar />
      <nav className="flex h-[30px] shrink-0 items-center gap-4 border-b border-[#f0f0f0] bg-white pt-0.5 pl-2">
        {MENUS.map((m) => (
          <button key={m} type="button">{m}</button>
        ))}
      </nav>
      <Toolbar />
      <div role="tablist" className="flex h-7 shrink-0 items-end pl-0.5">
        <button
          type="button"
          role="tab"
          aria-selected="true"
          className="h-[27px] w-[173px] border-x border-t border-[#d5d5d5] bg-white text-base leading-none"
        >
          BUCK_CONVERTER
        </button>
      </div>
      <div className="flex min-h-0 flex-1">
        <Palette />
        <main className="mr-0.5 flex min-w-0 flex-1 flex-col border border-t-2 border-[#80848f] bg-white">
          <div className="flex h-[45px] shrink-0 items-center border-b-2 border-[#80848f] pr-2 pl-[3px]">
            <ModelIcon />
            <span className="ml-[3px] flex-1 text-base">BUCK_CONVERTER</span>
            <button type="button" aria-label="Recent models">
              <Icon w={14} h={8}>
                <path d="M0 0H14L7 8Z" fill="#000" />
              </Icon>
            </button>
          </div>
          <div className="relative min-h-0 flex-1 overflow-hidden">
            <Diagram />
            <div className="absolute right-0.5 bottom-0.5 flex h-4 gap-0.5">
              <div className="w-[5px] bg-[#f0f0f0]" />
              <div className="w-1.5 bg-[#f0f0f0]" />
              <div className="w-3.5 bg-[#f0f0f0]" />
            </div>
          </div>
        </main>
      </div>
      <footer className="grid h-[31px] shrink-0 grid-cols-2 items-center border-b-2 border-[#555555] pt-1">
        <span className="pl-1.5">Ready</span>
        <div className="flex gap-2.5 pr-0.5">
          <a href="#warnings" className="text-[#10107c]">View 2 warnings</a>
          <span>100%</span>
          <a href="#solver" className="ml-auto text-[#10107c]">auto(ode23tb)</a>
        </div>
      </footer>
    </div>
  );
}
